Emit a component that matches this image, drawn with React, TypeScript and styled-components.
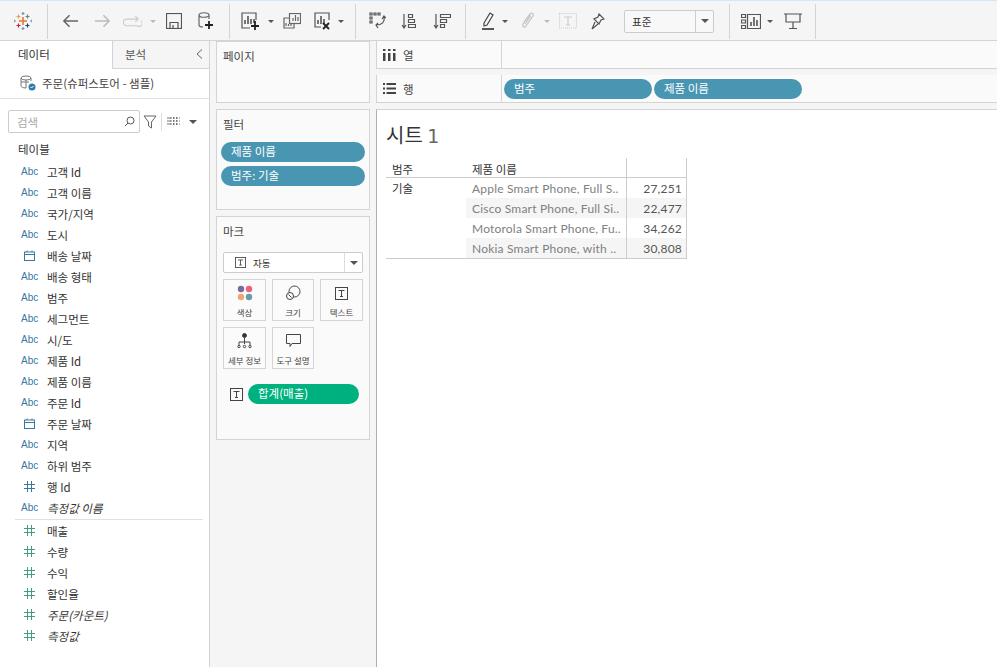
import React from "react";
import styled, { createGlobalStyle } from "styled-components";

const font = `"Noto Sans CJK KR", "Noto Sans", sans-serif`;
const Global = createGlobalStyle`
  html, body { margin: 0; padding: 0; background: #f5f5f5; }
  body { font-family: ${font}; color: #333; }
  * { box-sizing: border-box; }
`;
const Page = styled.div`
  width: 997px; height: 667px; overflow: hidden; display: flex; flex-direction: column;
  border-top: 1px solid #cfe8fa; background: #f5f5f5;
`;
const Toolbar = styled.div`
  height: 39px; flex: none; display: flex; align-items: center; padding: 3px 0 2px 0;
`;
const Group = styled.div<{ $w: number }>`
  width: ${p => p.$w}px; height: 35px; flex: none; border-right: 1px solid #d4d4d4; position: relative;
  display: flex; align-items: center;
`;
const Tool = styled.svg<{ $ml: number }>`
  flex: none; margin-left: ${p => p.$ml}px; fill: none; stroke: #555; stroke-width: 1.2;
`;
const Caret = styled.i<{ $ml: number; $off?: boolean }>`
  flex: none; margin-left: ${p => p.$ml}px; width: 0; height: 0;
  border-left: 3px solid transparent; border-right: 3px solid transparent;
  border-top: 3px solid ${p => (p.$off ? "#bbb" : "#555")};
`;
const BigCaret = styled(Caret)`
  border-left-width: 4px; border-right-width: 4px; border-top-width: 4px;
`;
const Select = styled.div`
  margin-left: 19px; width: 90px; height: 23px; border: 1px solid #ccc; border-radius: 2px; background: #f8f8f8;
  display: flex; align-items: center; font-size: 10.5px; color: #333; flex: none;
`;
const SelectText = styled.span`flex: 1; padding-left: 7px;`;
const SelectArrow = styled.span`
  width: 18px; height: 21px; border-left: 1px solid #ccc; display: flex; align-items: center; justify-content: center;
`;
const Main = styled.div`flex: 1; display: flex; min-height: 0; border-top: 1px solid #d4d4d4;`;
const Left = styled.div`width: 210px; flex: none; background: #fff; border-right: 1px solid #d4d4d4; display: flex; flex-direction: column;`;
const Tabs = styled.div`height: 28px; display: flex; flex: none;`;
const DataTab = styled.div`width: 112px; padding: 5px 0 0 18px; font-size: 11.5px; color: #333;`;
const AnalysisTab = styled.div`
  flex: 1; background: #f5f5f5; border-left: 1px solid #d4d4d4; border-bottom: 1px solid #d4d4d4;
  padding: 5px 6px 0 12px; font-size: 11.5px; color: #555; display: flex; justify-content: space-between;
`;
const Chevron = styled.svg`margin-top: 2px; fill: none; stroke: #666;`;
const Source = styled.div`
  height: 30px; flex: none; border-bottom: 1px solid #e2e2e2; display: flex; align-items: center; padding: 0 0 2px 19px;
  font-size: 11.5px; color: #444; gap: 5px;
`;
const SearchRow = styled.div`height: 35px; flex: none; display: flex; align-items: center; padding: 10px 0 0 8px;`;
const SearchBox = styled.div`
  width: 132px; height: 23px; border: 1px solid #ccc; border-radius: 2px; display: flex; align-items: center;
  justify-content: space-between; padding: 0 3px 0 8px; font-size: 11.5px; color: #aaa;
`;
const Divider = styled.span`width: 1px; height: 18px; background: #ddd; margin: 0 5px 0 4px;`;
const TableTitle = styled.div`height: 23px; margin-top: 4px; padding: 3px 0 0 18px; font-size: 11.5px; color: #333; line-height: 17px;`;
const FieldRow = styled.div<{ $italic?: boolean }>`
  height: 21px; display: flex; align-items: center; font-size: 11.5px; color: #333;
  font-style: ${p => (p.$italic ? "italic" : "normal")};
`;
const FieldIcon = styled.span<{ $green?: boolean }>`
  width: 47px; flex: none; padding-left: 21px; font-size: 10px; font-style: normal; font-family: "Liberation Sans", sans-serif;
  color: ${p => (p.$green ? "#3f9e80" : "#38789f")}; display: flex; align-items: center;
`;
const GlyphSlot = styled.span`margin-left: 3px; display: flex;`;
const Sep = styled.div`height: 1px; background: #e0e0e0; margin: 1px 6px 0 15px;`;
const Mid = styled.div`width: 166px; flex: none; padding: 0 6px; display: flex; flex-direction: column; gap: 6px;`;
const Card = styled.div<{ $h: number }>`
  height: ${p => p.$h}px; background: #fafafa; border: 1px solid #d4d4d4; padding: 6px 6px 0 6px; flex: none;
`;
const CardTitle = styled.div`font-size: 11.5px; color: #444; line-height: 17px;`;
const Pill = styled.div<{ $w?: number }>`
  height: 20px; width: ${p => (p.$w ? p.$w + "px" : "auto")}; border-radius: 10px; background: #4996b2; color: #fff;
  font-size: 11.5px; line-height: 19px; padding-left: 10px; flex: none;
`;
const GreenPill = styled(Pill)`background: #00b180; width: 111px;`;
const FilterPills = styled.div`display: flex; flex-direction: column; gap: 4px; margin: 9px -2px 0;`;
const MarkSelect = styled.div`
  margin-top: 12px; height: 21px; background: #fff; border: 1px solid #ccc; border-radius: 2px; display: flex; align-items: center;
  font-size: 9.5px; color: #333;
`;
const MarkLabel = styled.span`flex: 1; display: flex; align-items: center; gap: 7px; padding-left: 11px;`;
const MarkArrow = styled.span`width: 18px; height: 19px; border-left: 1px solid #ddd; display: flex; align-items: center; justify-content: center;`;
const MarkGrid = styled.div`display: grid; grid-template-columns: 43px 42px 43px; gap: 6px; margin-top: 6px;`;
const MarkBtn = styled.div`
  height: 42px; background: #fbfbfb; border: 1px solid #d4d4d4; display: flex; flex-direction: column; align-items: center;
  padding-top: 5px; font-size: 8.5px; color: #444; line-height: 12px; white-space: nowrap; gap: 5px;
`;
const MarkGlyph = styled.span`height: 16px; display: flex; align-items: center; justify-content: center;`;
const MarkField = styled.div`display: flex; align-items: center; margin-top: 15px; padding-left: 7px; gap: 5px;`;
const Right = styled.div`flex: 1; display: flex; flex-direction: column; min-width: 0;`;
const Shelf = styled.div<{ $mb: number }>`
  height: 28px; flex: none; display: flex; background: #fafafa; margin-bottom: ${p => p.$mb}px;
  border: 1px solid #d4d4d4; border-right: none; border-top: none;
`;
const ShelfLabel = styled.div`
  width: 125px; flex: none; border-right: 1px solid #d4d4d4; display: flex; align-items: center; gap: 7px; padding-left: 6px;
  font-size: 11.5px; color: #444;
`;
const ShelfBody = styled.div`flex: 1; display: flex; align-items: center; gap: 2px; padding-left: 2px;`;
const Canvas = styled.div`
  flex: 1; background: #fff; border-left: 1px solid #b0b0b0; border-top: 1px solid #d4d4d4; padding: 10px 0 0 9px;
`;
const SheetTitle = styled.div`height: 29px; font-size: 20px; line-height: 29px; color: #333; font-weight: 400;`;
const SheetNum = styled.span`font-family: "DejaVu Sans", sans-serif; color: #666; font-size: 19px; line-height: 1;`;
const Table = styled.div`
  width: 301px; margin-top: 9px; display: grid; grid-template-columns: 80px 161px 60px; grid-auto-rows: 20px;
  border-bottom: 1px solid #ccc; font-size: 11.5px;
`;
const Head = styled.div<{ $edge?: boolean }>`
  border-bottom: 1px solid #ccc; padding-left: 6px; line-height: 23px; color: #333;
  border-right: ${p => (p.$edge ? "1px solid #ccc" : "none")};
`;
const Cell = styled.div<{ $shade?: boolean; $num?: boolean }>`
  background: ${p => (p.$shade ? "#f5f5f5" : "#fff")}; color: ${p => (p.$num ? "#555" : "#808080")};
  font-family: Lato, "Open Sans", sans-serif; font-size: 12px; line-height: 21px; white-space: nowrap; overflow: hidden;
  padding: ${p => (p.$num ? "0 4px 0 0" : "0 0 0 6px")}; text-align: ${p => (p.$num ? "right" : "left")};
  border-right: 1px solid #ccc; letter-spacing: 0.2px;
`;
const CatCell = styled.div`grid-row: span 4; color: #333; padding-left: 6px; line-height: 20px; background: #fff;`;

const TIcon = ({ s = 13 }: { s?: number }) => (
  <svg width={s} height={s} viewBox="0 0 13 13" style={{ flex: "none" }}>
    <rect x=".5" y=".5" width="12" height="12" fill="none" stroke="#444" />
    <path d="M3.500 3.500h6M6.500 3.500v6M5 9.500h3" stroke="#444" fill="none" />
  </svg>
);
const Calendar = () => (
  <svg width="11" height="11" viewBox="0 0 11 11" fill="none" stroke="#38789f" strokeWidth="1">
    <rect x=".5" y="2" width="10" height="8.500" /><path d="M.5 4.500h10M3 .5V2M8 .5V2" />
  </svg>
);
const Hash = ({ green }: { green?: boolean }) => (
  <svg width="11" height="11" viewBox="0 0 11 11" fill="none" stroke={green ? "#3f9e80" : "#38789f"} strokeWidth="1">
    <path d="M3.500 0v11M7.500 0v11M0 3.500h11M0 7.500h11" />
  </svg>
);

type F = { n: string; t: "a" | "d" | "h" | "g"; i?: boolean };
const dims: F[] = [
  { n: "고객 Id", t: "a" }, { n: "고객 이름", t: "a" }, { n: "국가/지역", t: "a" }, { n: "도시", t: "a" },
  { n: "배송 날짜", t: "d" }, { n: "배송 형태", t: "a" }, { n: "범주", t: "a" }, { n: "세그먼트", t: "a" },
  { n: "시/도", t: "a" }, { n: "제품 Id", t: "a" }, { n: "제품 이름", t: "a" }, { n: "주문 Id", t: "a" },
  { n: "주문 날짜", t: "d" }, { n: "지역", t: "a" }, { n: "하위 범주", t: "a" }, { n: "행 Id", t: "h" },
  { n: "측정값 이름", t: "a", i: true },
];
const meas: F[] = [
  { n: "매출", t: "g" }, { n: "수량", t: "g" }, { n: "수익", t: "g" }, { n: "할인율", t: "g" },
  { n: "주문(카운트)", t: "g", i: true }, { n: "측정값", t: "g", i: true },
];
const Field = ({ f }: { f: F }) => (
  <FieldRow $italic={f.i}>
    <FieldIcon $green={f.t === "g"}>
      {f.t === "a" ? "Abc" : f.t === "d" ? <GlyphSlot><Calendar /></GlyphSlot> : <GlyphSlot><Hash green={f.t === "g"} /></GlyphSlot>}
    </FieldIcon>
    {f.n}
  </FieldRow>
);
const rows = [
  ["Apple Smart Phone, Full S..", "27,251"],
  ["Cisco Smart Phone, Full Si..", "22,477"],
  ["Motorola Smart Phone, Fu..", "34,262"],
  ["Nokia Smart Phone, with ..", "30,808"],
];

export default function App() {
  return (
    <Page>
      <Global />
      <Toolbar>
        <Group $w={48}>
          <Tool $ml={14} width="18" height="18" viewBox="0 0 18 18" style={{ strokeWidth: 1.2 }}>
            <path d="M9 5v8M5 9h8" stroke="#e8762d" strokeWidth="1.600" />
            <path d="M4.500 2.500v4M2.500 4.500h4" stroke="#eb9a4b" />
            <path d="M13.500 2.500v4M11.500 4.500h4" stroke="#5b879b" />
            <path d="M4.500 11.500v4M2.500 13.500h4" stroke="#c72035" />
            <path d="M13.500 11.500v4M11.500 13.500h4" stroke="#1f457e" />
            <path d="M9 0v3M7.500 1.500h3M9 15v3M7.500 16.500h3M0 7.500v3M0 9h2M18 7.500v3M16 9h2" stroke="#7099a6" />
          </Tool>
        </Group>
        <Group $w={182}>
          <Tool $ml={14} width="17" height="16" viewBox="0 0 18 16" style={{ strokeWidth: 1.6 }}><path d="M17 8H2M8 2 2 8l6 6" stroke="#666" /></Tool>
          <Tool $ml={15} width="17" height="16" viewBox="0 0 18 16" style={{ strokeWidth: 1.6 }}><path d="M1 8h15M10 2l6 6-6 6" stroke="#bbb" /></Tool>
          <Tool $ml={11} width="20" height="12" viewBox="0 0 21 12"><path d="M4 4h13M14 1l3 3-3 3M5 4a3 3 0 0 0 0 7h11a3 3 0 0 0 4-5" stroke="#ccc" /></Tool>
          <Caret $ml={8} $off />
          <Tool $ml={10} width="16" height="16" viewBox="0 0 16 16"><rect x=".5" y=".5" width="15" height="15" stroke="#555" /><path d="M4 15.500v-6h8v6M7 15v-3" stroke="#555" /></Tool>
          <Tool $ml={16} width="16" height="18" viewBox="0 0 16 18"><path d="M1 3v10c0 1.500 2 2 4 2M11 3v4M1 3c0-3 10-3 10 0S1 6 1 3" stroke="#666" /><path d="M11 9v8M7 13h8" stroke="#222" strokeWidth="1.800" /></Tool>
        </Group>
        <Group $w={126}>
          <Tool $ml={11} width="19" height="18" viewBox="0 0 19 18"><path d="M15 8V1H1v15h8" stroke="#555" /><path d="M4 12V8M7 12V4M10 12V7M13 11V7" stroke="#555" strokeWidth="1.600" /><path d="M14 9v9M10 14h8" stroke="#222" strokeWidth="1.800" /></Tool>
          <Caret $ml={8} />
          <Tool $ml={9} width="18" height="16" viewBox="0 0 18 16"><rect x="6.500" y=".5" width="11" height="10" stroke="#666" /><path d="M6 5H1v10h10v-4M10 8V5M12.500 8V2M15 8V4M3 13v-3M5.500 13v-2M8 13v-2" stroke="#666" /></Tool>
          <Tool $ml={13} width="16" height="18" viewBox="0 0 16 18"><path d="M15 8V1H1v14h6" stroke="#555" /><path d="M4 12V8M7 12V4M10 12V7" stroke="#555" strokeWidth="1.600" /><path d="M9 11l6 6M15 11l-6 6" stroke="#222" strokeWidth="1.800" /></Tool>
          <Caret $ml={8} />
        </Group>
        <Group $w={110}>
          <Tool $ml={13} width="17" height="18" viewBox="0 0 17 18"><path d="M1 1h2v2H1zM5 1h2v2H5zM9 1h2v2H9zM1 5h2v2H1zM1 9h2v2H1z" stroke="#555" /><path d="M15 5c1 5-2 8-8 8M13 7l2-3 2 2M9 11l-2 2 2 3" stroke="#555" /></Tool>
          <Tool $ml={15} width="15" height="16" viewBox="0 0 15 16"><path d="M3 1v14M1 12l2 3 2-3" stroke="#555" /><path d="M7.500 1.500h4v3h-4zM7.500 6.500h6v3h-6zM7.500 11.500h7v3h-7z" stroke="#555" /></Tool>
          <Tool $ml={17} width="18" height="16" viewBox="0 0 18 16"><path d="M3 1v14M1 12l2 3 2-3" stroke="#555" /><path d="M7.500 1.500h10v3h-10zM7.500 6.500h6v3h-6zM7.500 11.500h4v3h-4z" stroke="#555" /></Tool>
        </Group>
        <Group $w={264}>
          <Tool $ml={15} width="14" height="18" viewBox="0 0 14 18"><path d="M3 11 9 1l3 2-6 10-3 1z" stroke="#444" /><path d="M1 17h12" stroke="#444" strokeWidth="1.800" /></Tool>
          <Caret $ml={7} />
          <Tool $ml={13} width="14" height="18" viewBox="0 0 14 18"><path d="M3 10 9 2c2-2 4 0 3 2l-7 10c-1 2-4 1-3-2l6-8c1-1 2 0 1 1l-5 7" stroke="#c4c4c4" /></Tool>
          <Caret $ml={9} $off />
          <Tool $ml={9} width="18" height="16" viewBox="0 0 18 16"><rect x=".5" y=".5" width="17" height="14.500" stroke="#ccc" strokeDasharray="1 1" /><path d="M5 4h8M9 4v8M7 12h4" stroke="#ccc" /></Tool>
          <Tool $ml={14} width="14" height="17" viewBox="0 0 14 17"><path d="M8 1l5 5-3 1-2 4-5-5 4-2zM4 9l-3 7 6-5" stroke="#555" /></Tool>
          <Select>
            <SelectText>표준</SelectText>
            <SelectArrow><BigCaret $ml={0} /></SelectArrow>
          </Select>
        </Group>
        <Group $w={86}>
          <Tool $ml={11} width="20" height="15" viewBox="0 0 20 15"><path d="M.5.500h4v3h-4zM.5 6h4v3h-4zM.5 11.500h4v3h-4zM6.500.500h13v14h-13z" stroke="#555" /><path d="M10 12V8M13 12V3M16 12V6" stroke="#555" strokeWidth="1.600" /></Tool>
          <Caret $ml={6} />
          <Tool $ml={11} width="18" height="16" viewBox="0 0 18 16"><path d="M0 1h18M2 1v8h14V1M9 9v6M5 15.500h8" stroke="#555" strokeWidth="1.200" /></Tool>
        </Group>
      </Toolbar>
      <Main>
        <Left>
          <Tabs>
            <DataTab>데이터</DataTab>
            <AnalysisTab>분석
              <Chevron width="7" height="12" viewBox="0 0 7 12"><path d="M6 1.500 1 6l5 4.500" /></Chevron>
            </AnalysisTab>
          </Tabs>
          <Source>
            <svg width="18" height="16" viewBox="0 0 18 16" fill="none" stroke="#777" style={{ flex: "none" }}>
              <ellipse cx="7" cy="3" rx="5" ry="2" /><path d="M2 3v8c0 1 2 2 5 2M12 3v3M2 7h8M7 5v8" />
              <circle cx="13" cy="12" r="3.500" fill="#2e7fa3" stroke="none" />
              <path d="M11.500 12l1 1 2-2" stroke="#fff" />
            </svg>
            주문(슈퍼스토어 - 샘플)
          </Source>
          <SearchRow>
            <SearchBox>검색
              <svg width="13" height="13" viewBox="0 0 13 13" fill="none" stroke="#555"><circle cx="7.500" cy="5.500" r="3.500" /><path d="M5 8l-3 3" /></svg>
            </SearchBox>
            <svg width="14" height="14" viewBox="0 0 14 14" fill="none" stroke="#666" style={{ marginLeft: 3 }}><path d="M1 1h12L8.500 7v6L5.500 11V7z" /></svg>
            <Divider />
            <svg width="13" height="9" viewBox="0 0 13 9" fill="none" stroke="#777"><path d="M0 1h13M0 4h13M0 7h13M3 0v8M6.500 0v8M9.500 0v8" strokeDasharray="2 1" /></svg>
            <BigCaret $ml={9} />
          </SearchRow>
          <TableTitle>테이블</TableTitle>
          {dims.map(f => <Field key={f.n} f={f} />)}
          <Sep />
          {meas.map(f => <Field key={f.n} f={f} />)}
        </Left>
        <Mid>
          <Card $h={62}><CardTitle>페이지</CardTitle></Card>
          <Card $h={101}>
            <CardTitle>필터</CardTitle>
            <FilterPills>
              <Pill>제품 이름</Pill>
              <Pill>범주: 기술</Pill>
            </FilterPills>
          </Card>
          <Card $h={224}>
            <CardTitle>마크</CardTitle>
            <MarkSelect>
              <MarkLabel><TIcon s={11} />자동</MarkLabel>
              <MarkArrow><BigCaret $ml={0} /></MarkArrow>
            </MarkSelect>
            <MarkGrid>
              <MarkBtn>
                <MarkGlyph><svg width="16" height="16" viewBox="0 0 16 16"><circle cx="4" cy="4" r="3.200" fill="#7c6a9c" /><circle cx="12" cy="4" r="3.200" fill="#f0627a" /><circle cx="4" cy="12" r="3.200" fill="#f2a571" /><circle cx="12" cy="12" r="3.200" fill="#6a9aa8" /></svg></MarkGlyph>
                색상
              </MarkBtn>
              <MarkBtn>
                <MarkGlyph><svg width="16" height="16" viewBox="0 0 16 16" fill="none" stroke="#444"><circle cx="9.500" cy="6.500" r="5.500" /><circle cx="5" cy="11" r="3.500" fill="#fbfbfb" /><path d="M3.500 9.500l3 3" /></svg></MarkGlyph>
                크기
              </MarkBtn>
              <MarkBtn><MarkGlyph><TIcon /></MarkGlyph>텍스트</MarkBtn>
              <MarkBtn>
                <MarkGlyph><svg width="15" height="16" viewBox="0 0 15 16" fill="none" stroke="#444"><circle cx="7.500" cy="2.500" r="2" fill="#333" /><path d="M7.500 5v6M2 12V9h11v3" /><circle cx="2" cy="13.500" r="1.200" /><circle cx="7.500" cy="13.500" r="1.200" /><circle cx="13" cy="13.500" r="1.200" /></svg></MarkGlyph>
                세부 정보
              </MarkBtn>
              <MarkBtn>
                <MarkGlyph><svg width="15" height="14" viewBox="0 0 15 14" fill="none" stroke="#444"><path d="M.5.500h14v9H6l-2 3v-3H.5z" /></svg></MarkGlyph>
                도구 설명
              </MarkBtn>
            </MarkGrid>
            <MarkField><TIcon /><GreenPill>합계(매출)</GreenPill></MarkField>
          </Card>
        </Mid>
        <Right>
          <Shelf $mb={6}>
            <ShelfLabel>
              <svg width="13" height="12" viewBox="0 0 13 12" fill="#444"><path d="M0 4h2.500v8H0zM5 4h2.500v8H5zM10 4h2.500v8H10zM0 0h2.500v2H0zM5 0h2.500v2H5zM10 0h2.500v2H10z" /></svg>
              <span>열</span>
            </ShelfLabel>
            <ShelfBody />
          </Shelf>
          <Shelf $mb={6}>
            <ShelfLabel>
              <svg width="13" height="11" viewBox="0 0 13 11" fill="#444"><path d="M0 0h2v2H0zM0 4.500h2v2H0zM0 9h2v2H0zM3.500 0H13v2H3.500zM3.500 4.500H13v2H3.500zM3.500 9H13v2H3.500z" /></svg>
              <span>행</span>
            </ShelfLabel>
            <ShelfBody>
              <Pill $w={148}>범주</Pill>
              <Pill $w={148}>제품 이름</Pill>
            </ShelfBody>
          </Shelf>
          <Canvas>
            <SheetTitle>시트 <SheetNum>1</SheetNum></SheetTitle>
            <Table>
              <Head>범주</Head><Head $edge>제품 이름</Head><Head $edge />
              <CatCell>기술</CatCell>
              {rows.flatMap((r, i) => [
                <Cell key={r[0]} $shade={i % 2 === 1}>{r[0]}</Cell>,
                <Cell key={r[1]} $num $shade={i % 2 === 1}>{r[1]}</Cell>,
              ])}
            </Table>
          </Canvas>
        </Right>
      </Main>
    </Page>
  );
}
